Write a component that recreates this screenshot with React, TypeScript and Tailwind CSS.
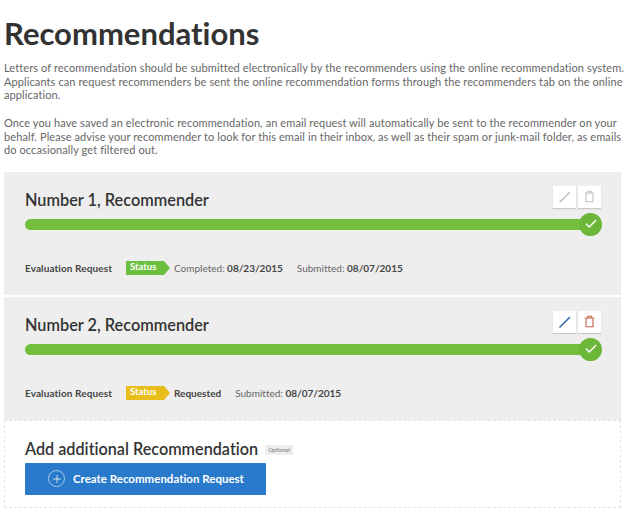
import { Check, Plus } from 'lucide-react'

interface Meta {
  label: string
  value: string
  strongLabel?: boolean
}

interface RecommenderProps {
  title: string
  statusColor: string
  active: boolean
  first: Meta
}

function PencilIcon({ color }: { color: string }) {
  return (
    <svg width="14" height="14" viewBox="0 0 14 14">
      <path d="M2 12 L11.5 2.5" stroke={color} strokeWidth="1.6" strokeLinecap="round" fill="none" />
      <path d="M1.5 12.5 L2.4 10.6 L3.4 11.6 Z" fill={color} />
    </svg>
  )
}

function TrashIcon({ color }: { color: string }) {
  return (
    <svg width="11" height="13" viewBox="0 0 12 14" fill="none" stroke={color} strokeWidth="1.2">
      <path d="M1 3.2 H11" />
      <path d="M4 3 V1.2 H8 V3" />
      <path d="M2.2 3.4 V12.8 H9.8 V3.4" />
    </svg>
  )
}

function IconButton({ children }: { children: React.ReactNode }) {
  return (
    <div className="flex h-[22px] w-[23px] items-center justify-center bg-white shadow-[0_1px_1px_rgba(0,0,0,0.15)]">
      {children}
    </div>
  )
}

function RecommenderPanel({ title, statusColor, active, first }: RecommenderProps) {
  return (
    <section className="h-[123px] bg-[#eeeeee] pl-[21px] pr-[20px] pt-[14px]">
      <div className="flex h-[28px] items-start justify-between">
        <h2 className="pt-[3px] text-[16.3px] leading-[22px] font-semibold text-[#333333]">{title}</h2>
        <div className="flex gap-[2px]">
          <IconButton>
            <PencilIcon color={active ? '#3f6fb0' : '#c4c4c4'} />
          </IconButton>
          <IconButton>
            <TrashIcon color={active ? '#c8614e' : '#c4c4c4'} />
          </IconButton>
        </div>
      </div>
      <div className="relative mt-[5px] h-[11px] rounded-l-full bg-[#72bf3c]">
        <div className="absolute right-[-1px] top-[-6px] flex h-[23px] w-[23px] items-center justify-center rounded-full bg-[#6cb63a]">
          <Check size={14} color="#ffffff" strokeWidth={2.5} />
        </div>
      </div>
      <div className="mt-[31px] flex items-center text-[10px] leading-[14px] text-[#666666]">
        <span className="w-[101px] font-bold tracking-[0.1px] text-[#444444]">Evaluation Request</span>
        <span className={`h-[14px] w-[38px] pl-[4px] text-[9.5px] leading-[11px] font-bold text-white ${statusColor}`}>
          Status
        </span>
        <span
          className={`mr-[4px] h-0 w-0 border-y-[7px] border-l-[6px] border-y-transparent ${
            active ? 'border-l-[#e8bd1a]' : 'border-l-[#6cc040]'
          }`}
        />
        <span className={first.strongLabel ? 'font-bold text-[#444444]' : ''}>
          {first.label}
          {first.value && <strong className="font-bold text-[#444444]"> {first.value}</strong>}
        </span>
        <span className="ml-[14px]">
          Submitted: <strong className="font-bold text-[#444444]">08/07/2015</strong>
        </span>
      </div>
    </section>
  )
}

export default function App() {
  return (
    <div className="h-[513px] w-[636px] overflow-hidden bg-white pl-[4px] pr-[15px] font-['Lato',sans-serif] [font-variant-ligatures:none]">
      <h1 className="pt-[15px] text-[31px] leading-[37px] font-bold text-[#333333]">Recommendations</h1>
      <div className="mt-[9px] whitespace-nowrap text-[11px] leading-[13.7px] tracking-[0.1px] text-[#666666]">
        <p>
          Letters of recommendation should be submitted electronically by the recommenders using the online recommendation system.
          <br />
          Applicants can request recommenders be sent the online recommendation forms through the recommenders tab on the online
          <br />
          application.
        </p>
        <p className="mt-[13.7px]">
          Once you have saved an electronic recommendation, an email request will automatically be sent to the recommender on your
          <br />
          behalf. Please advise your recommender to look for this email in their inbox, as well as their spam or junk-mail folder, as emails
          <br />
          do occasionally get filtered out.
        </p>
      </div>
      <div className="mt-[15px] flex flex-col gap-[2px]">
        <RecommenderPanel
          title="Number 1, Recommender"
          statusColor="bg-[#6cc040]"
          active={false}
          first={{ label: 'Completed:', value: '08/23/2015' }}
        />
        <RecommenderPanel
          title="Number 2, Recommender"
          statusColor="bg-[#e8bd1a]"
          active
          first={{ label: 'Requested', value: '', strongLabel: true }}
        />
      </div>
      <section className="h-[88px] border border-dashed border-[#e4e4e4] pl-[20px] pt-[17px]">
        <div className="flex items-center">
          <h2 className="text-[16.2px] leading-[22px] font-semibold text-[#333333]">Add additional Recommendation</h2>
          <span className="ml-[7px] mt-[3px] bg-[#eeeeee] px-[3px] text-[6px] leading-[10px] text-[#777777] italic">Optional</span>
        </div>
        <button className="mt-[3px] flex h-[32px] w-[241px] items-center rounded-[1px] bg-[#2a7acb] pl-[23px] text-[11.5px] font-bold text-white">
          <span className="mr-[8px] flex h-[17px] w-[17px] items-center justify-center rounded-full border border-[#a9cdf0]">
            <Plus size={12} strokeWidth={1.5} />
          </span>
          Create Recommendation Request
        </button>
      </section>
    </div>
  )
}
